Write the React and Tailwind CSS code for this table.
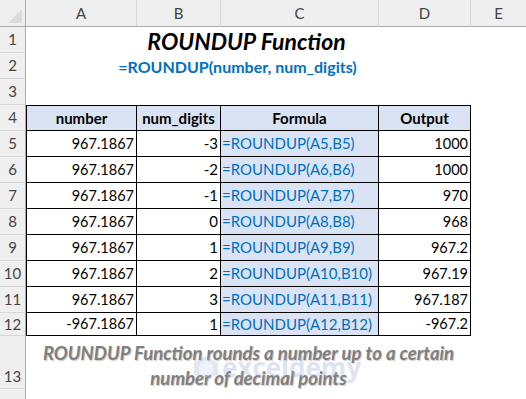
import React from "react";

const cols = ["A", "B", "C", "D", "E"];
const data = [
  ["967.1867", "-3", "=ROUNDUP(A5,B5)", "1000"],
  ["967.1867", "-2", "=ROUNDUP(A6,B6)", "1000"],
  ["967.1867", "-1", "=ROUNDUP(A7,B7)", "970"],
  ["967.1867", "0", "=ROUNDUP(A8,B8)", "968"],
  ["967.1867", "1", "=ROUNDUP(A9,B9)", "967.2"],
  ["967.1867", "2", "=ROUNDUP(A10,B10)", "967.19"],
  ["967.1867", "3", "=ROUNDUP(A11,B11)", "967.187"],
  ["-967.1867", "1", "=ROUNDUP(A12,B12)", "-967.2"],
];

function RowHead({ n, bottom }) {
  return (
    <div
      className={`bg-[#efefef] border-r border-[#ababab] border-b border-b-[#d8d8d8] flex justify-center text-[15px] text-[#444444] ${
        bottom ? "items-end pb-[1px]" : "items-center"
      }`}
    >
      {n}
    </div>
  );
}

export default function App() {
  const font = { fontFamily: "Lato, 'Open Sans', sans-serif" };
  return (
    <div
      className="relative w-[526px] h-[399px] overflow-hidden bg-white text-black"
      style={font}
    >
      <div className="grid grid-cols-[26px_111px_84px_158px_92px_55px] grid-rows-[27px_26px_26px_26px_26px_26px_26px_26px_26px_26px_26px_26px_23px_53px_10px]">
        {/* header row */}
        <div className="bg-[#efefef] border-r border-b border-[#ababab] relative">
          <div className="absolute right-[3px] bottom-[3px] w-0 h-0 border-l-[14px] border-l-transparent border-b-[14px] border-b-[#dcdcdc]" />
        </div>
        {cols.map((c, i) => (
          <div
            key={c}
            className={`bg-[#efefef] border-b border-[#ababab] flex items-center justify-center text-[15px] text-[#444444] ${
              i < 4 ? "border-r border-r-[#d8d8d8]" : ""
            }`}
          >
            {c}
          </div>
        ))}

        {/* row 1 */}
        <RowHead n={1} />
        <div className="col-span-4 flex items-center justify-center font-bold italic text-[23px] leading-none pt-[2px] pr-[4px]">
          ROUNDUP Function
        </div>
        <div />

        {/* row 2 */}
        <RowHead n={2} />
        <div className="col-span-4 flex items-center justify-center font-bold text-[16px] text-[#0070c0] pt-[1px] pr-[22px]">
          =ROUNDUP(number, num_digits)
        </div>
        <div />

        {/* row 3 */}
        <RowHead n={3} />
        <div className="col-span-4" />
        <div />

        {/* row 4 header */}
        <RowHead n={4} />
        {["number", "num_digits", "Formula", "Output"].map((h, i) => (
          <div
            key={h}
            className={`bg-[#dae3f3] border-t border-r border-b border-black flex items-center justify-center font-bold text-[15px] ${
              i === 0 ? "border-l" : ""
            }`}
          >
            {h}
          </div>
        ))}
        <div />

        {data.map((r, ri) => (
          <React.Fragment key={ri}>
            <RowHead n={ri + 5} />
            <div className="border-l border-r border-b border-black flex items-center justify-end pr-[2px] text-[14.5px]">
              {r[0]}
            </div>
            <div className="border-r border-b border-black flex items-center justify-end pr-[2px] text-[15px]">
              {r[1]}
            </div>
            <div className="bg-[#dae3f3] border-r border-b border-black flex items-center justify-start pl-[1px] text-[15px] text-[#0070c0]">
              {r[2]}
            </div>
            <div className="border-r border-b border-black flex items-center justify-end pr-[2px] text-[14.5px]">
              {r[3]}
            </div>
            <div />
          </React.Fragment>
        ))}

        {/* row 13 */}
        <RowHead n={13} bottom />
        <div className="col-span-4 flex items-start justify-center text-center font-bold italic text-[18.5px] leading-[25px] text-[#7f7f7f] pt-[5px] [text-shadow:1px_1px_1px_#c8c8c8]">
          <div>
            ROUNDUP Function rounds a number up to a certain
            <br />
            number of decimal points
          </div>
        </div>
        <div />

        {/* row 14 */}
        <div className="bg-[#efefef] border-r border-[#ababab]" />
        <div className="col-span-5" />
      </div>

      {/* watermark */}
      <div className="absolute left-[193px] top-[354px] flex items-center gap-[3px] opacity-30 pointer-events-none">
        <svg width="26" height="24" viewBox="0 0 26 24">
          <polygon points="13,1 25,8 25,20 13,23 1,20 1,8" fill="#9fb6dc" />
          <polygon points="13,6 20,10 20,18 13,20 6,18 6,10" fill="#c9d7ee" />
        </svg>
        <span className="text-[26px] font-bold leading-none text-[#8fa8d6]" style={{ fontFamily: "'Open Sans', sans-serif" }}>
          exceldemy
        </span>
      </div>
    </div>
  );
}
